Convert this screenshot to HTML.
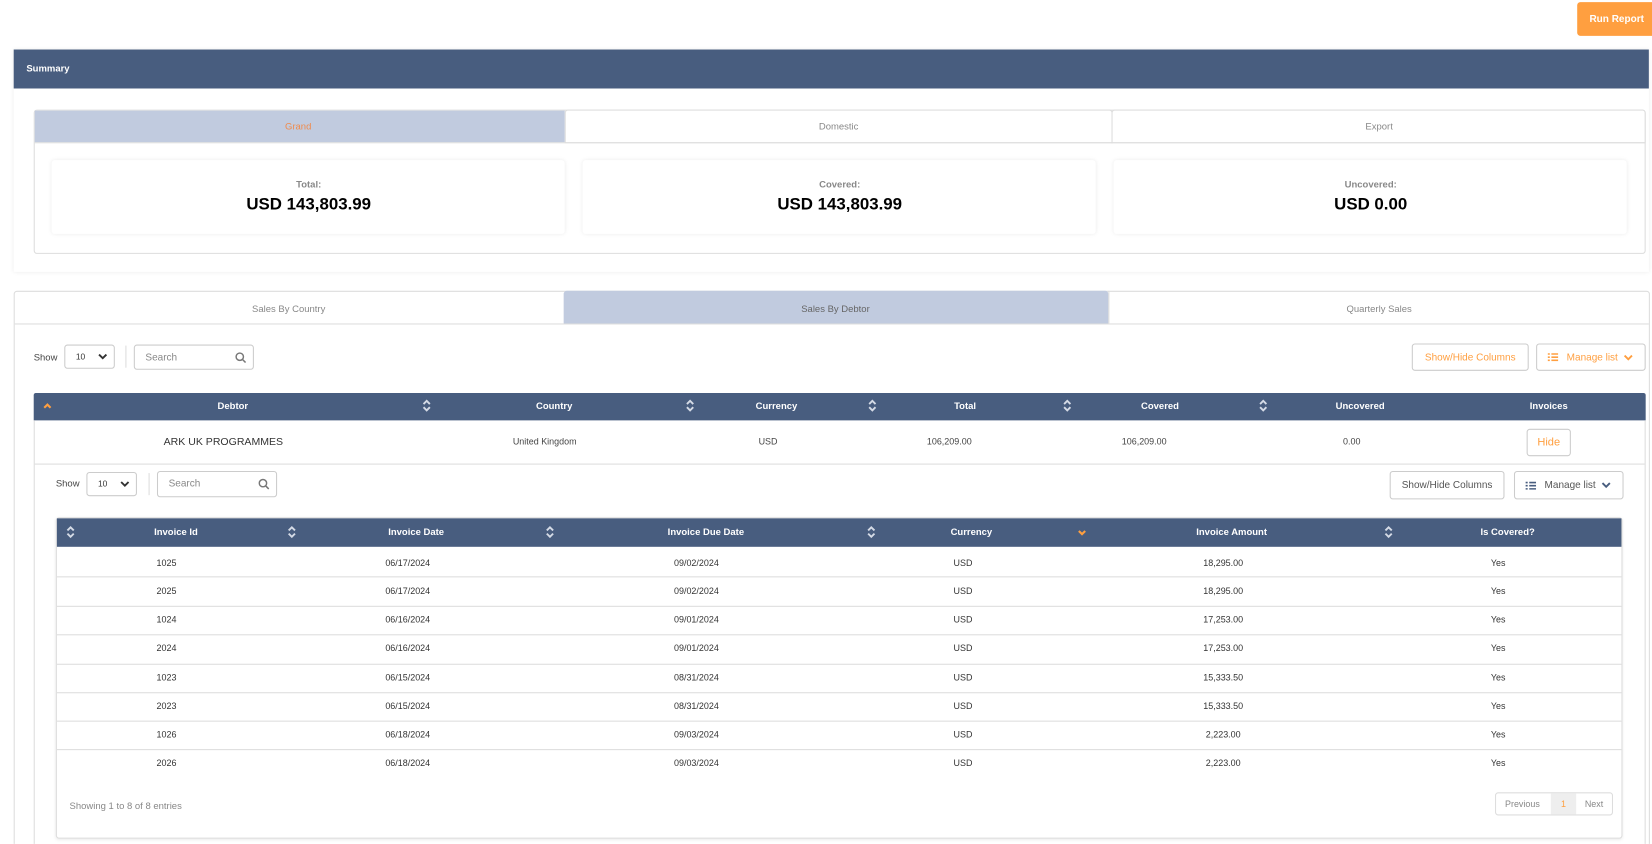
<!DOCTYPE html>
<html><head><meta charset="utf-8"><style>
html,body{margin:0;padding:0;background:#fff;overflow:hidden;width:1652px;height:844px}
#w{position:absolute;left:0;top:0;width:1568px;height:801px;overflow:hidden;transform:scale(1.05357);transform-origin:0 0;font-family:"Liberation Sans",sans-serif;font-size:9px;color:#444}
.a{position:absolute}
.c{position:absolute;transform:translate(-50%,-50%);white-space:nowrap}
.l{position:absolute;transform:translateY(-50%);white-space:nowrap}
.hd{background:#485d7f}
.w{color:#fff;font-weight:bold}
.box{border:1px solid #ddd;box-sizing:border-box;background:#fff}
.btn{position:absolute;border:1px solid #ccc;border-radius:3px;box-sizing:border-box;background:#fff;display:flex;align-items:center;justify-content:center;font-size:9.5px}
.line{position:absolute;height:1px;background:#ddd}
</style></head><body><div id="w">
<svg width="0" height="0" style="position:absolute"><defs>
<symbol id="s" viewBox="0 0 10 14"><path d="M2 5.5L5 2.5L8 5.5M2 8.5L5 11.5L8 8.5" fill="none" stroke="#d5dbe6" stroke-width="1.8"/></symbol>
<symbol id="dv" viewBox="0 0 9 7"><path d="M1 1.5l3.5 3.5 3.5-3.5" fill="none" stroke="#333" stroke-width="1.8"/></symbol>
</defs></svg>

<div class="btn" style="left:1497px;top:2px;width:75px;height:32px;background:#ff9f40;border:none;color:#fff;font-weight:bold;font-size:9.5px">Run Report</div>

<div class="a" style="left:13px;top:47px;width:1552px;height:211px;background:#fff;box-shadow:0 0 4px rgba(0,0,0,.08)"></div>
<div class="a hd" style="left:13px;top:47px;width:1552px;height:37px"></div>
<div class="l w" style="left:25px;top:65px">Summary</div>
<div class="a box" style="left:32px;top:104px;width:1530px;height:137px;border-radius:3px"></div>
<div class="a" style="left:33px;top:105px;width:503px;height:30px;background:#c1cbdf"></div>
<div class="a box" style="left:536px;top:104px;width:520px;height:32px;border-radius:3px 3px 0 0"></div>
<div class="a box" style="left:1055px;top:104px;width:507px;height:32px;border-radius:3px 3px 0 0"></div>
<div class="line" style="left:33px;top:135px;width:1528px"></div>
<div class="c" style="left:283px;top:120px;color:#f08a4b">Grand</div>
<div class="c" style="left:796px;top:120px;color:#888">Domestic</div>
<div class="c" style="left:1309px;top:120px;color:#888">Export</div>
<div class="a" style="left:49px;top:152px;width:487px;height:70px;box-shadow:0 0 4px rgba(0,0,0,.08);border-radius:3px"></div>
<div class="a" style="left:553px;top:152px;width:487px;height:70px;box-shadow:0 0 4px rgba(0,0,0,.08);border-radius:3px"></div>
<div class="a" style="left:1057px;top:152px;width:487px;height:70px;box-shadow:0 0 4px rgba(0,0,0,.08);border-radius:3px"></div>
<div class="c" style="left:293px;top:175px;color:#888;font-weight:bold">Total:</div>
<div class="c" style="left:293px;top:195px;color:#000;font-weight:bold;font-size:16px">USD 143,803.99</div>
<div class="c" style="left:797px;top:175px;color:#888;font-weight:bold">Covered:</div>
<div class="c" style="left:797px;top:195px;color:#000;font-weight:bold;font-size:16px">USD 143,803.99</div>
<div class="c" style="left:1301px;top:175px;color:#888;font-weight:bold">Uncovered:</div>
<div class="c" style="left:1301px;top:195px;color:#000;font-weight:bold;font-size:16px">USD 0.00</div>

<div class="a box" style="left:13px;top:276px;width:1553px;height:600px;border-radius:3px"></div>
<div class="a" style="left:535px;top:276px;width:517px;height:31px;background:#c1cbdf;border-radius:3px 3px 0 0"></div>
<div class="a" style="left:1052px;top:276px;width:1px;height:31px;background:#ddd"></div>
<div class="line" style="left:14px;top:307px;width:1551px"></div>
<div class="c" style="left:274px;top:293px;color:#888">Sales By Country</div>
<div class="c" style="left:793px;top:293px;color:#666">Sales By Debtor</div>
<div class="c" style="left:1309px;top:293px;color:#888">Quarterly Sales</div>

<div class="l" style="left:32px;top:339px">Show</div>
<div class="btn" style="left:61px;top:327px;width:48px;height:23px;justify-content:space-between;padding:0 6px 0 10px;font-size:8px;color:#333">10<svg width="9" height="7"><use href="#dv"/></svg></div>
<div class="a" style="left:119px;top:328px;width:1px;height:21px;background:#ddd"></div>
<div class="btn" style="left:127px;top:327px;width:114px;height:24px;justify-content:space-between;padding:0 6px 0 10px;color:#888">Search<svg width="11" height="11" viewBox="0 0 12 12"><circle cx="5" cy="5" r="3.8" fill="none" stroke="#777" stroke-width="1.5"/><path d="M8 8l3 3" stroke="#777" stroke-width="1.6"/></svg></div>
<div class="btn" style="left:1340px;top:326px;width:111px;height:26px;color:#ff9f40">Show/Hide Columns</div>
<div class="btn" style="left:1458px;top:326px;width:104px;height:26px;color:#ff9f40;justify-content:flex-start;padding-left:10px"><svg width="10" height="8" viewBox="0 0 10 8" style="margin-right:8px"><path d="M0 1h2M3.5 1h6.5M0 4h2M3.5 4h6.5M0 7h2M3.5 7h6.5" stroke="#ff9f40" stroke-width="1.5"/></svg>Manage list<svg width="9" height="7" viewBox="0 0 9 7" style="margin-left:5px"><path d="M1 1.5l3.5 3.5 3.5-3.5" fill="none" stroke="#ff9f40" stroke-width="1.8"/></svg></div>

<div class="a hd" style="left:32px;top:373px;width:1530px;height:26px;border-radius:2px 2px 0 0"></div>
<svg class="a" style="left:40px;top:380px" width="10" height="10" viewBox="0 0 10 10"><path d="M2 7L5 4L8 7" fill="none" stroke="#ff9f40" stroke-width="2"/></svg>
<div class="c w" style="left:221px;top:385px">Debtor</div>
<div class="c w" style="left:526px;top:385px">Country</div>
<div class="c w" style="left:737px;top:385px">Currency</div>
<div class="c w" style="left:916px;top:385px">Total</div>
<div class="c w" style="left:1101px;top:385px">Covered</div>
<div class="c w" style="left:1291px;top:385px">Uncovered</div>
<div class="c w" style="left:1470px;top:385px">Invoices</div>
<svg class="a" style="left:400px;top:378px" width="10" height="14"><use href="#s"/></svg>
<svg class="a" style="left:650px;top:378px" width="10" height="14"><use href="#s"/></svg>
<svg class="a" style="left:823px;top:378px" width="10" height="14"><use href="#s"/></svg>
<svg class="a" style="left:1008px;top:378px" width="10" height="14"><use href="#s"/></svg>
<svg class="a" style="left:1194px;top:378px" width="10" height="14"><use href="#s"/></svg>
<div class="a" style="left:32px;top:399px;width:1px;height:480px;background:#ddd"></div>
<div class="a" style="left:1561px;top:399px;width:1px;height:480px;background:#ddd"></div>
<div class="c" style="left:212px;top:420px;font-size:10px;color:#333">ARK UK PROGRAMMES</div>
<div class="c" style="left:517px;top:419px;font-size:8.5px">United Kingdom</div>
<div class="c" style="left:729px;top:419px;font-size:8.5px">USD</div>
<div class="c" style="left:901px;top:419px;font-size:8.5px">106,209.00</div>
<div class="c" style="left:1086px;top:419px;font-size:8.5px">106,209.00</div>
<div class="c" style="left:1283px;top:419px;font-size:8.5px">0.00</div>
<div class="btn" style="left:1449px;top:407px;width:42px;height:26px;color:#ff9f40;font-size:10.5px">Hide</div>
<div class="line" style="left:33px;top:440px;width:1528px"></div>

<div class="l" style="left:53px;top:459px">Show</div>
<div class="btn" style="left:82px;top:448px;width:48px;height:23px;justify-content:space-between;padding:0 6px 0 10px;font-size:8px;color:#333">10<svg width="9" height="7"><use href="#dv"/></svg></div>
<div class="a" style="left:141px;top:449px;width:1px;height:21px;background:#ddd"></div>
<div class="btn" style="left:149px;top:447px;width:114px;height:25px;justify-content:space-between;padding:0 6px 0 10px;color:#888">Search<svg width="11" height="11" viewBox="0 0 12 12"><circle cx="5" cy="5" r="3.8" fill="none" stroke="#777" stroke-width="1.5"/><path d="M8 8l3 3" stroke="#777" stroke-width="1.6"/></svg></div>
<div class="btn" style="left:1319px;top:447px;width:109px;height:27px;color:#555">Show/Hide Columns</div>
<div class="btn" style="left:1437px;top:447px;width:104px;height:27px;color:#555;justify-content:flex-start;padding-left:10px"><svg width="10" height="8" viewBox="0 0 10 8" style="margin-right:8px"><path d="M0 1h2M3.5 1h6.5M0 4h2M3.5 4h6.5M0 7h2M3.5 7h6.5" stroke="#485d7f" stroke-width="1.5"/></svg>Manage list<svg width="9" height="7" viewBox="0 0 9 7" style="margin-left:5px"><path d="M1 1.5l3.5 3.5 3.5-3.5" fill="none" stroke="#485d7f" stroke-width="1.8"/></svg></div>

<div class="a box" style="left:53px;top:491px;width:1487px;height:305px;border-radius:3px;box-shadow:0 1px 3px rgba(0,0,0,.08)"></div>
<div class="a hd" style="left:54px;top:492px;width:1485px;height:27px"></div>
<svg class="a" style="left:62px;top:498px" width="10" height="14"><use href="#s"/></svg>
<svg class="a" style="left:272px;top:498px" width="10" height="14"><use href="#s"/></svg>
<svg class="a" style="left:517px;top:498px" width="10" height="14"><use href="#s"/></svg>
<svg class="a" style="left:822px;top:498px" width="10" height="14"><use href="#s"/></svg>
<svg class="a" style="left:1022px;top:501px" width="10" height="10" viewBox="0 0 10 10"><path d="M2 3L5 6L8 3" fill="none" stroke="#ff9f40" stroke-width="2"/></svg>
<svg class="a" style="left:1313px;top:498px" width="10" height="14"><use href="#s"/></svg>
<div class="c w" style="left:167px;top:505px">Invoice Id</div>
<div class="c w" style="left:395px;top:505px">Invoice Date</div>
<div class="c w" style="left:670px;top:505px">Invoice Due Date</div>
<div class="c w" style="left:922px;top:505px">Currency</div>
<div class="c w" style="left:1169px;top:505px">Invoice Amount</div>
<div class="c w" style="left:1431px;top:505px">Is Covered?</div>

<div class="l" style="left:66px;top:765px;color:#888">Showing 1 to 8 of 8 entries</div>
<div class="a box" style="left:1419px;top:752px;width:112px;height:22px;border-radius:3px"></div>
<div class="a" style="left:1472px;top:753px;width:24px;height:20px;background:#eee"></div>
<div class="c" style="left:1445px;top:763px;color:#888;font-size:8.5px">Previous</div>
<div class="c" style="left:1484px;top:763px;color:#ff9f40;font-size:8.5px">1</div>
<div class="c" style="left:1513px;top:763px;color:#888;font-size:8.5px">Next</div>

<div style="font-size:8.5px;color:#333">
<div class="c" style="left:158px;top:534px">1025</div><div class="c" style="left:387px;top:534px">06/17/2024</div><div class="c" style="left:661px;top:534px">09/02/2024</div><div class="c" style="left:914px;top:534px">USD</div><div class="c" style="left:1161px;top:534px">18,295.00</div><div class="c" style="left:1422px;top:534px">Yes</div>
<div class="line" style="left:54px;top:547px;width:1485px"></div>
<div class="c" style="left:158px;top:561px">2025</div><div class="c" style="left:387px;top:561px">06/17/2024</div><div class="c" style="left:661px;top:561px">09/02/2024</div><div class="c" style="left:914px;top:561px">USD</div><div class="c" style="left:1161px;top:561px">18,295.00</div><div class="c" style="left:1422px;top:561px">Yes</div>
<div class="line" style="left:54px;top:575px;width:1485px"></div>
<div class="c" style="left:158px;top:588px">1024</div><div class="c" style="left:387px;top:588px">06/16/2024</div><div class="c" style="left:661px;top:588px">09/01/2024</div><div class="c" style="left:914px;top:588px">USD</div><div class="c" style="left:1161px;top:588px">17,253.00</div><div class="c" style="left:1422px;top:588px">Yes</div>
<div class="line" style="left:54px;top:602px;width:1485px"></div>
<div class="c" style="left:158px;top:615px">2024</div><div class="c" style="left:387px;top:615px">06/16/2024</div><div class="c" style="left:661px;top:615px">09/01/2024</div><div class="c" style="left:914px;top:615px">USD</div><div class="c" style="left:1161px;top:615px">17,253.00</div><div class="c" style="left:1422px;top:615px">Yes</div>
<div class="line" style="left:54px;top:630px;width:1485px"></div>
<div class="c" style="left:158px;top:643px">1023</div><div class="c" style="left:387px;top:643px">06/15/2024</div><div class="c" style="left:661px;top:643px">08/31/2024</div><div class="c" style="left:914px;top:643px">USD</div><div class="c" style="left:1161px;top:643px">15,333.50</div><div class="c" style="left:1422px;top:643px">Yes</div>
<div class="line" style="left:54px;top:657px;width:1485px"></div>
<div class="c" style="left:158px;top:670px">2023</div><div class="c" style="left:387px;top:670px">06/15/2024</div><div class="c" style="left:661px;top:670px">08/31/2024</div><div class="c" style="left:914px;top:670px">USD</div><div class="c" style="left:1161px;top:670px">15,333.50</div><div class="c" style="left:1422px;top:670px">Yes</div>
<div class="line" style="left:54px;top:684px;width:1485px"></div>
<div class="c" style="left:158px;top:697px">1026</div><div class="c" style="left:387px;top:697px">06/18/2024</div><div class="c" style="left:661px;top:697px">09/03/2024</div><div class="c" style="left:914px;top:697px">USD</div><div class="c" style="left:1161px;top:697px">2,223.00</div><div class="c" style="left:1422px;top:697px">Yes</div>
<div class="line" style="left:54px;top:711px;width:1485px"></div>
<div class="c" style="left:158px;top:724px">2026</div><div class="c" style="left:387px;top:724px">06/18/2024</div><div class="c" style="left:661px;top:724px">09/03/2024</div><div class="c" style="left:914px;top:724px">USD</div><div class="c" style="left:1161px;top:724px">2,223.00</div><div class="c" style="left:1422px;top:724px">Yes</div>
</div>
</div></body></html>
